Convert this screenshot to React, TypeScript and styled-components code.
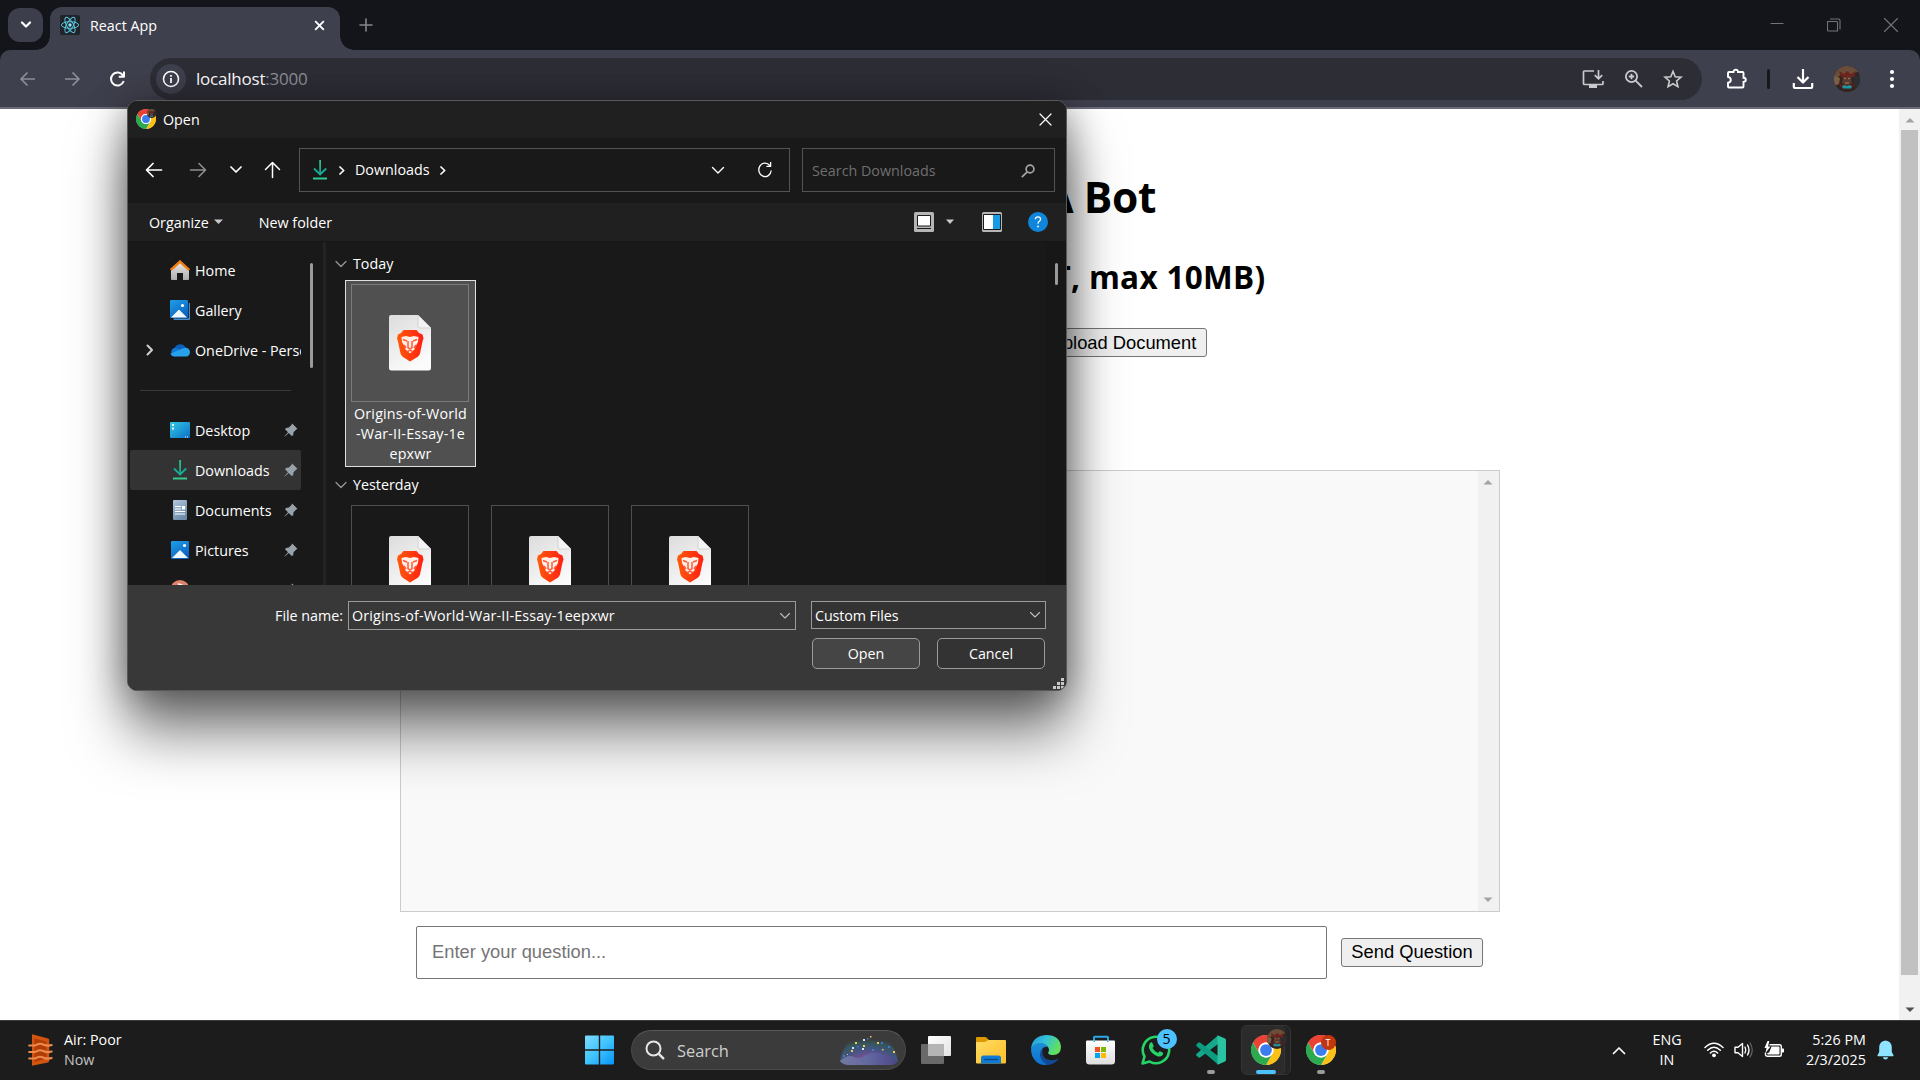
import React from "react";
import styled, { createGlobalStyle } from "styled-components";

const ui = `"Open Sans", "Noto Sans", sans-serif`;
const arial = `"Liberation Sans", Arial, sans-serif`;

const Global = createGlobalStyle`
  * { box-sizing: border-box; }
  html, body { margin: 0; padding: 0; overflow: hidden; background: #fff; }
  button, input { font-family: inherit; margin: 0; }
  svg { display: block; flex: none; }
`;

const Screen = styled.div`
  position: relative;
  width: 1920px;
  height: 1080px;
  display: flex;
  flex-direction: column;
  overflow: hidden;
  font-family: ${ui};
  font-size: 14.3px;
  line-height: 20px;
  white-space: nowrap;
`;

const Gap = styled.span<{ $w: number }>`
  flex: none;
  width: ${(p) => p.$w}px;
`;
const Fill = styled.span`
  flex: 1;
`;

/* ---------- browser chrome ---------- */

const TabStrip = styled.header`
  height: 50px;
  flex: none;
  display: flex;
  align-items: flex-start;
  background: #14151a;
  padding: 7px 22px 0 8px;
`;
const TabSearch = styled.button`
  width: 35px;
  height: 34px;
  margin: 1px 7px 0 0;
  border: 0;
  border-radius: 12px;
  background: #3d3e4b;
  display: grid;
  place-items: center;
  padding: 0;
`;
const Tab = styled.div`
  position: relative;
  width: 290px;
  height: 43px;
  display: flex;
  align-items: center;
  padding: 0 15px 7px 10px;
  background: #3f404d;
  border-radius: 12px 12px 0 0;
  color: #fff;
  &::before, &::after {
    content: "";
    position: absolute;
    bottom: 0;
    width: 14px;
    height: 14px;
  }
  &::before { left: -14px; background: radial-gradient(circle at 0 0, transparent 13.5px, #3f404d 14px); }
  &::after { right: -14px; background: radial-gradient(circle at 100% 0, transparent 13.5px, #3f404d 14px); }
`;
const TabTitle = styled.span`
  flex: 1;
  margin-left: 10px;
  padding-top: 1px;
`;
const NewTab = styled.div`
  margin: 11px auto 0 19px;
`;
const WindowButtons = styled.div`
  display: flex;
  gap: 43px;
  padding-top: 11px;
`;
const ToolbarBack = styled.div`
  flex: none;
  background: #14151a;
`;
const Toolbar = styled.div`
  height: 59px;
  display: flex;
  align-items: center;
  background: #3f404d;
  border-bottom: 2px solid #6a6b76;
  border-radius: 10px 10px 0 0;
  padding: 0 22px 0 18px;
`;
const NavIcons = styled.div`
  display: flex;
  align-items: center;
  gap: 25px;
  width: 132px;
`;
const Omnibox = styled.div`
  width: 1552px;
  height: 42px;
  border-radius: 21px;
  background: #2d2d36;
  display: flex;
  align-items: center;
  padding: 0 19px 0 6px;
`;
const InfoDot = styled.div`
  width: 30px;
  height: 30px;
  border-radius: 50%;
  background: #3f404d;
  display: grid;
  place-items: center;
`;
const Address = styled.span`
  flex: 1;
  margin-left: 10px;
  font-size: 17px;
  letter-spacing: -0.22px;
  padding-top: 1px;
  color: #fff;
  i { font-style: normal; color: #8e8f98; }
`;
const OmniActions = styled.div`
  display: flex;
  align-items: center;
  gap: 19.5px;
`;
const ToolSeparator = styled.span`
  width: 3px;
  height: 20px;
  border-radius: 2px;
  background: #17181d;
  margin: 0 22px 0 19px;
`;

/* ---------- web page ---------- */

const Viewport = styled.div`
  height: 911px;
  flex: none;
  display: flex;
  background: #fff;
`;
const Page = styled.main`
  flex: 1;
  display: flex;
  flex-direction: column;
  align-items: center;
  color: #000;
`;
const Title = styled.h1`
  width: 413px;
  margin: 58px 0 0;
  font-size: 42.5px;
  line-height: 60px;
  font-weight: 700;
  letter-spacing: -0.4px;
  text-align: right;
`;
const Subtitle = styled.h2`
  width: 632px;
  margin: 28px 0 0;
  font-size: 31.5px;
  line-height: 44px;
  font-weight: 700;
  letter-spacing: 0.3px;
  text-align: right;
`;
const UploadRow = styled.div`
  width: 514px;
  margin-top: 29px;
  display: flex;
  justify-content: flex-end;
`;
const WebButton = styled.button<{ $w: number; $bottom?: number; $right?: number }>`
  width: ${(p) => p.$w}px;
  height: 29px;
  padding: 0 ${(p) => p.$right ?? 0}px ${(p) => p.$bottom ?? 0}px 0;
  border: 1px solid #767676;
  border-radius: 3px;
  background: #efefef;
  color: #000;
  font: 18.33px/24px ${arial};
  white-space: nowrap;
`;
const ChatLog = styled.section`
  width: 1100px;
  height: 442px;
  margin-top: 113px;
  border: 1px solid #ccc;
  background: #f9f9f9;
  display: flex;
  justify-content: flex-end;
`;
const AskRow = styled.div`
  width: 1067px;
  height: 53px;
  margin-top: 14px;
  display: flex;
  align-items: center;
  justify-content: space-between;
`;
const Question = styled.input`
  width: 911px;
  height: 53px;
  padding: 0 15px 2px;
  border: 1px solid #767676;
  border-radius: 2px;
  background: #fff;
  font: 18.33px ${arial};
  &::placeholder { color: #757575; opacity: 1; }
`;
const Scrollbar = styled.div`
  width: 21px;
  display: flex;
  flex-direction: column;
  justify-content: space-between;
  align-items: center;
  background: #f1f1f1;
`;
const Thumb = styled.div`
  width: 17px;
  height: 845px;
  background: #c1c1c1;
  margin-bottom: auto;
`;
const ArrowCell = styled.div<{ $lift?: number }>`
  height: 21px;
  display: grid;
  place-items: center;
  padding-bottom: ${(p) => p.$lift ?? 0}px;
`;

/* ---------- file dialog ---------- */

const Dialog = styled.div`
  position: absolute;
  left: 127px;
  top: 100px;
  width: 940px;
  height: 591px;
  border: 1px solid #585858;
  border-radius: 10px;
  overflow: hidden;
  background: #191919;
  color: #fff;
  display: flex;
  flex-direction: column;
  box-shadow: 0 42px 56px rgba(0, 0, 0, 0.5), 0 4px 38px rgba(0, 0, 0, 0.42);
`;
const DialogTitle = styled.div`
  height: 37px;
  flex: none;
  display: flex;
  align-items: center;
  padding: 0 14px 1px 8px;
  background: #202020;
`;
const DialogCaption = styled.span`
  flex: 1;
  margin-left: 7px;
  padding-top: 1px;
`;
const DialogIcon = styled.div`
  position: relative;
  width: 20px;
  height: 20px;
`;
const DialogNav = styled.div`
  height: 65px;
  flex: none;
  display: flex;
  align-items: center;
  padding: 0 11px 1px 17px;
`;
const PathBox = styled.div`
  width: 491px;
  height: 44px;
  margin: 0 12px 0 18px;
  border: 1px solid #535353;
  display: flex;
  align-items: center;
  padding: 0 17px 0 12px;
`;
const PathText = styled.span`
  margin: 0 10px 0 10px;
`;
const SearchBox = styled.div`
  width: 253px;
  height: 44px;
  border: 1px solid #535353;
  display: flex;
  align-items: center;
  justify-content: space-between;
  padding: 1px 19px 0 9px;
  color: #6f6f6f;
`;
const Commands = styled.div`
  height: 38px;
  flex: none;
  display: flex;
  align-items: center;
  padding: 0 18px 0 21px;
  background: #202020;
`;
const Command = styled.span`
  padding-top: 2px;
`;
const CommandRight = styled.div`
  margin-left: auto;
  display: flex;
  align-items: center;
`;
const DialogBody = styled.div`
  height: 344px;
  flex: none;
  display: flex;
  overflow: hidden;
  border-top: 1px solid #161616;
`;
const Sidebar = styled.nav`
  width: 173px;
  padding: 8px 0 0 2px;
  flex: none;
`;
const SideItem = styled.div<{ $active?: boolean }>`
  height: 40px;
  display: grid;
  grid-template-columns: 36px 28px 1fr auto;
  align-items: center;
  overflow: hidden;
  border-radius: 2px;
  padding-right: 3px;
  background: ${(p) => (p.$active ? "#333" : "transparent")};
`;
const SideLabel = styled.span`
  overflow: hidden;
  margin: 0 -3px 0 1px;
  padding-top: 2px;
`;
const IconSlot = styled.span<{ $nudge?: number }>`
  display: grid;
  place-items: center;
  padding-left: ${(p) => p.$nudge ?? 0}px;
`;
const SideRule = styled.div`
  height: 40px;
  padding: 20px 10px 0;
  &::before { content: ""; display: block; height: 1px; background: #3a3a3a; }
`;
const SideScroll = styled.div`
  width: 25px;
  padding: 21px 0 0 9px;
  flex: none;
  border-right: 3px solid #232323;
  &::before { content: ""; display: block; width: 3px; height: 105px; border-radius: 2px; background: #9a9a9a; }
`;
const Files = styled.div`
  flex: 1;
  padding: 12px 0 0 9px;
`;
const GroupHead = styled.div`
  display: flex;
  align-items: center;
  height: 20px;
  gap: 6px;
`;
const Tiles = styled.div`
  display: flex;
  gap: 9px;
  padding: 6px 0 8px 10px;
`;
const Tile = styled.div<{ $selected?: boolean }>`
  width: 131px;
  height: 187px;
  display: flex;
  flex-direction: column;
  align-items: center;
  border: 1px solid ${(p) => (p.$selected ? "#e0e0e0" : "transparent")};
  background: ${(p) => (p.$selected ? "#505050" : "transparent")};
  padding-top: 3px;
  letter-spacing: 0.17px;
  text-align: center;
`;
const Thumbnail = styled.div<{ $selected?: boolean }>`
  width: 118px;
  height: 118px;
  flex: none;
  margin: 0 1px 2px 0;
  border: 1px solid ${(p) => (p.$selected ? "#7b7b7b" : "#4d4d4d")};
  display: grid;
  place-items: center;
  padding-bottom: ${(p) => (p.$selected ? 1 : 0)}px;
`;
const FilesScroll = styled.div`
  width: 21px;
  flex: none;
  padding: 21px 0 0 10px;
  background: #171717;
  &::before { content: ""; display: block; width: 3px; height: 22px; border-radius: 2px; background: #9a9a9a; }
`;
const DialogFoot = styled.div`
  flex: 1;
  background: #383838;
  display: flex;
  flex-direction: column;
  padding: 16px 20px 0 147px;
`;
const FieldRow = styled.div`
  display: flex;
  align-items: flex-start;
  height: 37px;
`;
const FieldLabel = styled.label`
  width: 73px;
  line-height: 29px;
`;
const Combo = styled.div<{ $w: number; $h: number; $bg: string }>`
  width: ${(p) => p.$w}px;
  height: ${(p) => p.$h}px;
  background: ${(p) => p.$bg};
  border: 1px solid #9b9b9b;
  display: flex;
  align-items: center;
  justify-content: space-between;
  padding: 0 4px 0 3px;
`;
const FileName = styled.span`
  letter-spacing: 0.14px;
`;
const FileType = styled.span`
  letter-spacing: -0.1px;
  padding-top: 2px;
`;
const ButtonRow = styled.div`
  display: flex;
  justify-content: flex-end;
  gap: 17px;
  padding-right: 1px;
`;
const DialogButton = styled.button<{ $bg: string }>`
  width: 108px;
  height: 31px;
  padding: 0 0 1px;
  border: 1px solid #9b9b9b;
  border-radius: 5px;
  background: ${(p) => p.$bg};
  color: #fff;
  font-size: 14.3px;
`;
const Grip = styled.div`
  display: grid;
  grid-template-columns: repeat(3, 3px);
  grid-auto-rows: 3px;
  gap: 1px;
  align-self: flex-end;
  margin: 9px -18px 0 0;
  i { background: #c8c8c8; }
  i.off { background: transparent; }
`;

/* ---------- taskbar ---------- */

const Taskbar = styled.footer`
  height: 60px;
  flex: none;
  display: grid;
  grid-template-columns: 572px 1fr auto;
  align-items: center;
  background: #1c1c1c;
  border-top: 1px solid #3a3a3a;
  padding-bottom: 1px;
  color: #fff;
`;
const Weather = styled.div`
  display: flex;
  align-items: center;
  padding-left: 28px;
  gap: 11px;
  span { display: block; }
  span + span { color: #c4c4c4; }
`;
const Apps = styled.div`
  display: flex;
  align-items: center;
`;
const AppSlot = styled.div`
  position: relative;
  width: 55px;
  height: 50px;
  display: flex;
  justify-content: center;
  padding-top: 10px;
`;
const GroupPlate = styled.div<{ $back?: boolean }>`
  position: absolute;
  left: ${(p) => (p.$back ? 10 : 3)}px;
  top: 0;
  width: ${(p) => (p.$back ? 43 : 44)}px;
  height: 50px;
  border-radius: 6px;
  border: 1px solid #343434;
  background: ${(p) => (p.$back ? "#242424" : "#2b2b2b")};
`;
const AppIcon = styled.div`
  position: relative;
  width: 30px;
  height: 30px;
`;
const Running = styled.span<{ $active?: boolean }>`
  position: absolute;
  bottom: 1px;
  left: 50%;
  transform: translateX(-50%);
  width: ${(p) => (p.$active ? 20 : 8)}px;
  height: 4px;
  border-radius: 2px;
  background: ${(p) => (p.$active ? "#4cc2ff" : "#9a9a9a")};
`;
const Badge = styled.span<{ $x: number; $y: number; $size: number; $bg: string; $fg: string; $font: number }>`
  position: absolute;
  left: ${(p) => p.$x}px;
  top: ${(p) => p.$y}px;
  width: ${(p) => p.$size}px;
  height: ${(p) => p.$size}px;
  border-radius: 50%;
  background: ${(p) => p.$bg};
  color: ${(p) => p.$fg};
  font-size: ${(p) => p.$font}px;
  line-height: ${(p) => p.$size}px;
  text-align: center;
`;
const FaceBadge = styled.span<{ $x: number; $y: number; $size: number }>`
  position: absolute;
  left: ${(p) => p.$x}px;
  top: ${(p) => p.$y}px;
  width: ${(p) => p.$size}px;
  height: ${(p) => p.$size}px;
`;
const SearchPill = styled.div`
  width: 275px;
  height: 40px;
  margin: 0 2px 0 4px;
  border-radius: 20px;
  background: #3b3b3b;
  border: 1px solid #4a4a4a;
  border-top-color: #595959;
  display: flex;
  align-items: center;
  padding: 0 6px 0 13px;
  color: #cfcfcf;
  font-size: 16.4px;
  span { flex: 1; margin-left: 12px; padding-top: 1px; }
`;
const Tray = styled.div`
  display: flex;
  align-items: center;
  padding-right: 26px;
`;
const Lang = styled.div`
  width: 40px;
  margin: 0 17px 0 21px;
  text-align: center;
`;
const TrayIcons = styled.div`
  display: flex;
  align-items: center;
  gap: 10px;
`;
const Clock = styled.div`
  width: 82px;
  margin-right: 11px;
  letter-spacing: 0.05px;
  text-align: right;
`;

/* ---------- drawings ---------- */

type StrokeProps = { w: number; h: number; d: string; c?: string; sw?: number; cap?: "round" | "butt"; fill?: string };
const Stroke = ({ w, h, d, c = "#fff", sw = 1.5, cap = "round", fill = "none" }: StrokeProps) => (
  <svg width={w} height={h} viewBox={`0 0 ${w} ${h}`}>
    <path d={d} stroke={c} strokeWidth={sw} strokeLinecap={cap} strokeLinejoin="round" fill={fill} />
  </svg>
);

const Triangle = ({ c, up }: { c: string; up?: boolean }) => (
  <svg width="10" height="6" viewBox="0 0 10 6">
    <path d={up ? "M0.5 5.5h9L5 1z" : "M0.5 .5h9L5 5z"} fill={c} />
  </svg>
);

const ReactLogo = () => (
  <svg width="20" height="20" viewBox="0 0 20 20">
    <rect width="20" height="20" rx="2" fill="#20232a" />
    <g fill="none" stroke="#58c4dc" strokeWidth="1">
      <ellipse cx="10" cy="10" rx="8.6" ry="3.3" />
      <ellipse cx="10" cy="10" rx="8.6" ry="3.3" transform="rotate(60 10 10)" />
      <ellipse cx="10" cy="10" rx="8.6" ry="3.3" transform="rotate(120 10 10)" />
    </g>
    <circle cx="10" cy="10" r="1.7" fill="#8be3f5" />
  </svg>
);

const Face = ({ size }: { size: number }) => (
  <svg width={size} height={size} viewBox="0 0 26 26">
    <clipPath id={`face${size}`}><circle cx="13" cy="13" r="13" /></clipPath>
    <g clipPath={`url(#face${size})`}>
      <rect width="26" height="26" fill="#33241f" />
      <path d="M0 0h26v5l-8 3-12 1-6 8z" fill="#6b4e3a" />
      <path d="M0 10l6 2-1 6-5 2z" fill="#7d5e46" />
      <path d="M19 8l7 2v14l-6-3z" fill="#2b2d30" />
      <path d="M5 5l5 3 3-3 4 3 5-3-2 6H7z" fill="#6e241e" />
      <path d="M9 11h8l1 6-5 3-5-3z" fill="#543a30" />
      <path d="M10 12l2 1M16 12l-2 1M11 17h4" stroke="#c27a48" strokeWidth="1" />
      <path d="M5 16l4 3h8l4-3-1 5H6z" fill="#5c1f1e" />
      <path d="M8 20.5l2-1.500 3 1 3-1 2 1.500-1 2H9z" fill="#1c98a0" />
    </g>
  </svg>
);

const ChromeLogo = ({ size }: { size: number }) => (
  <svg width={size} height={size} viewBox="0 0 48 48">
    <circle cx="24" cy="24" r="23.500" fill="#fff" />
    <path d="M3.200 12A24 24 0 0 1 44.800 12H24A12 12 0 0 0 13.600 30z" fill="#ea4335" />
    <path d="M44.800 12A24 24 0 0 1 24 48L34.400 30A12 12 0 0 0 24 12z" fill="#fbc116" />
    <path d="M24 48A24 24 0 0 1 3.200 12L13.600 30A12 12 0 0 0 34.400 30z" fill="#2da94f" />
    <circle cx="24" cy="24" r="12" fill="#fff" />
    <circle cx="24" cy="24" r="9.400" fill="#3b7ded" />
  </svg>
);

const BraveFile = () => (
  <svg width="44" height="58" viewBox="0 0 44 58">
    <defs>
      <linearGradient id="paper" x1="0" y1="0" x2="0.5" y2="1">
        <stop offset="0" stopColor="#dcdcdc" /><stop offset="1" stopColor="#fbfbfb" />
      </linearGradient>
      <linearGradient id="brave" x1="0" y1="0" x2="1" y2="0">
        <stop offset="0" stopColor="#ff5a0a" /><stop offset="1" stopColor="#ff1f12" />
      </linearGradient>
    </defs>
    <path d="M3 1h27l13 13v40a2.500 2.500 0 0 1-2.500 2.500h-37A2.500 2.500 0 0 1 1 54V3a2 2 0 0 1 2-2z" fill="url(#paper)" />
    <path d="M30 1l13 13H32a2 2 0 0 1-2-2z" fill="#f3f3f3" stroke="#c9c9c9" strokeWidth=".7" />
    <path d="M15.500 16h13l2.500 3 3.500 1.500 1 4-1 3-2.500 12q-.6 2-2.200 3.200L22 47.500l-7.300-4.800q-1.600-1.200-2.200-3.200L10 27.500l-1-3 1-4L13 19z" fill="url(#brave)" />
    <path d="M13.500 23l4.500-1 4 1 4-1 4.500 1-.5 5-2.500 4.500-1 3-4.500 4-4.500-4-1-3-2.500-4.500z" fill="#fff0e8" />
    <path d="M15 25.500l4 1.500M29 25.500L25 27M20 27v6.500l2 1.500 2-1.500V27M16 31l2 3M28 31l-2 3M19.500 37.500L22 36l2.500 1.500" stroke="#ff5a3a" strokeWidth="1.500" fill="none" />
  </svg>
);

const DownloadGreen = () => (
  <svg width="16" height="22" viewBox="0 0 16 22">
    <defs><linearGradient id="dl" x1="0" y1="0" x2="0" y2="1"><stop offset="0" stopColor="#2fcf97" /><stop offset="1" stopColor="#12a594" /></linearGradient></defs>
    <path d="M7.250 1h1.700v14h-1.700z" fill="url(#dl)" />
    <path d="M2 9.500l6.100 6 6.100-6" fill="none" stroke="#17ad96" strokeWidth="1.800" />
    <path d="M1 19.500h14" stroke="#34c98f" strokeWidth="1.800" />
  </svg>
);

const HomeIcon = () => (
  <svg width="20" height="20" viewBox="0 0 20 20">
    <defs><linearGradient id="hm" x1="0" y1="0" x2="0" y2="1"><stop offset="0" stopColor="#e9e9e9" /><stop offset="1" stopColor="#adadad" /></linearGradient></defs>
    <path d="M1 9.500L10 1.500l9 8V19a1 1 0 0 1-1 1h-5v-7H7v7H2a1 1 0 0 1-1-1z" fill="url(#hm)" />
    <path d="M.8 10L10 1.500l9.200 8.500" fill="none" stroke="#f07f13" strokeWidth="2.400" />
  </svg>
);

const PictureIcon = ({ stacked }: { stacked?: boolean }) => (
  <svg width="20" height="20" viewBox="0 0 20 20">
    <defs><linearGradient id="pic" x1="0" y1="0" x2="0.600" y2="1"><stop offset="0" stopColor="#1fa0e8" /><stop offset="1" stopColor="#0a62c0" /></linearGradient></defs>
    {stacked && <path d="M3 18.500h15a.8.8 0 0 0 .8-.8V3h1.200v16.200a.8.8 0 0 1-.8.8H4z" fill="#3f8fd6" />}
    <rect x={stacked ? 0 : 1} y={stacked ? 0 : 1} width="18" height="18" rx="1.200" fill="url(#pic)" />
    <path d={stacked ? "M1 17.500l7.500-7.500q.5-.5 1 0l7.500 7.500z" : "M2 18l7.500-7.500q.5-.5 1 0L18 18z"} fill="#eef7fd" />
    <circle cx={stacked ? 12.5 : 14.5} cy={5.5} r="1.600" fill="#fff" />
  </svg>
);

const CloudIcon = () => (
  <svg width="20" height="14" viewBox="0 0 20 14">
    <path d="M4.500 5.500A6 6 0 0 1 15.500 4.500a4.600 4.600 0 0 1 4.500 5l-8-1z" fill="#0a5fb8" />
    <path d="M4.500 13.500A4.400 4.400 0 0 1 4.500 5q2.500-.4 4.500 1.200l7 5z" fill="#0f78d4" />
    <path d="M4.500 13.500q-3 0-4.200-2.800L10 6.500l3-1.200a5 5 0 0 1 2.500-.6q4 .4 4.500 4.500-.2 4-4.200 4.300z" fill="#28a0ea" />
  </svg>
);

const DesktopIcon = () => (
  <svg width="20" height="16" viewBox="0 0 20 16">
    <defs><linearGradient id="dsk" x1="0" y1="0" x2="1" y2="1"><stop offset="0" stopColor="#33c9e2" /><stop offset="1" stopColor="#0b70c9" /></linearGradient></defs>
    <rect width="20" height="16" rx="1" fill="url(#dsk)" />
    <path d="M2 2h2v2H2zM2 5.500h2v2H2zM15 14.500h1v1h-1zM17 14.500h1v1h-1z" fill="#e6fbff" />
  </svg>
);

const DocumentIcon = () => (
  <svg width="14" height="20" viewBox="0 0 14 20">
    <defs><linearGradient id="doc" x1="0" y1="0" x2="0.500" y2="1"><stop offset="0" stopColor="#b3c6dc" /><stop offset="1" stopColor="#6d8cab" /></linearGradient></defs>
    <rect width="14" height="20" rx="1" fill="url(#doc)" />
    <path d="M2 6.500h6M2 9h6M2 11.500h10M2 14h10" stroke="#fff" strokeWidth="1.200" />
    <path d="M9 6h3v3.500H9z" fill="#fff" />
  </svg>
);

const MusicIcon = () => (
  <svg width="20" height="20" viewBox="0 0 20 20">
    <circle cx="10" cy="9.500" r="9.500" fill="#e2826a" />
    <path d="M9 14V4l5 2" fill="none" stroke="#fff" strokeWidth="1.500" />
  </svg>
);

const Pin = () => (
  <svg width="14" height="14" viewBox="0 0 14 14">
    <path d="M8.200.6l5.200 5.200-1.400.9-2.500 2.600-.3 3-1.500.6-3-3L.8 13.600.4 13.200 4 9.300 1.200 6.400l.6-1.500 3-.3L7.400 2z" fill="#98a2ab" />
  </svg>
);

const Refresh = () => (
  <svg width="14" height="18" viewBox="0 0 14 18">
    <path d="M11.800 4.500A6.200 6.800 0 1 0 13.200 9.500M12.600 1v4.400H8.400" fill="none" stroke="#fff" strokeWidth="1.300" />
  </svg>
);

const WeatherIcon = () => (
  <svg width="25" height="32" viewBox="0 0 25 32">
    <path d="M4 1q0-1 1.200-.6L20 4.500q1.200.4 1.200 1.500v21q0 1-1.200 1.400L5.200 31.500Q4 32 4 31z" fill="#d35411" />
    <path d="M6.500 4.500l12 3v17l-12 3.500z" fill="#b03d06" />
    <g fill="none" stroke="#ee8a4d" strokeWidth="2.100" strokeLinecap="round">
      <path d="M1.200 11.500h6q4-3 8-1 4 1.800 8.500 .6" />
      <path d="M1.200 18h6q4-3 8-1 4 1.800 8.500 .6" />
      <path d="M1.200 24.500h6q4-3 8-1 4 1.800 8.500 .6" />
    </g>
  </svg>
);

const WindowsLogo = () => (
  <svg width="30" height="30" viewBox="0 0 30 30">
    <defs><linearGradient id="win" x1="0" y1="0" x2="1" y2="1"><stop offset="0" stopColor="#7fdcff" /><stop offset=".5" stopColor="#3fc4fd" /><stop offset="1" stopColor="#0693f8" /></linearGradient></defs>
    <path d="M1 .5H13.800V14.300H0V1.500a1 1 0 0 1 1-1zM15.200.5H28a1 1 0 0 1 1 1V14.300H15.200zM0 15.700H13.800V29.500H1a1 1 0 0 1-1-1zM15.200 15.700H29V28.500a1 1 0 0 1-1 1H15.200z" fill="url(#win)" />
  </svg>
);

const SearchArt = () => (
  <svg width="60" height="32" viewBox="0 0 60 32">
    <defs>
      <radialGradient id="sky" cx=".5" cy=".9" r=".75">
        <stop offset="0" stopColor="#66734f" /><stop offset=".3" stopColor="#6c5290" /><stop offset=".6" stopColor="#41557f" /><stop offset=".82" stopColor="#35565c" /><stop offset="1" stopColor="#3b3b3b" />
      </radialGradient>
      <linearGradient id="hill" x1="0" y1="0" x2="1" y2="0"><stop offset="0" stopColor="#7d81a5" /><stop offset=".5" stopColor="#6068a8" /><stop offset="1" stopColor="#4c4583" /></linearGradient>
    </defs>
    <path d="M1 27Q6 1 30 .5q24 .5 29 26.500-3 4-8 4H10q-6 0-9-4z" fill="url(#sky)" />
    <path d="M1 27q8-7 14-4 5 3 12-2 10-5 18 0 8 1 14 6-3 4-8 4H10q-6 0-9-4z" fill="url(#hill)" opacity=".85" />
    <path d="M16 8h2v2h-2zM24 11h2v2h-2zM12 16h2v2h-2zM38 8h2v2h-2zM31 2h1.500v1.500H31zM54 17h2v2h-2zM43 15h1.500v1.500H43zM8 20h1v1H8z" fill="#f0cc4a" />
    <path d="M24 5h2v2h-2zM13 13h2v2h-2zM23 14h2v2h-2z" fill="#d5e2ff" />
    <path d="M28 4h1.500v1.500H28zM33 15h2v2h-2zM42 8h2v2h-2zM49 12h2v2h-2zM4 21h2v2H4zM18 12h1.500v1.500H18z" fill="#3f78d6" />
  </svg>
);

const TaskView = () => (
  <svg width="30" height="30" viewBox="0 0 30 30">
    <defs><linearGradient id="tv" x1="0" y1="0" x2="1" y2="1"><stop offset="0" stopColor="#fff" /><stop offset="1" stopColor="#e3e3e3" /></linearGradient></defs>
    <rect x="7" y="1" width="23" height="20" rx="1" fill="url(#tv)" />
    <rect x="0" y="9" width="23" height="20" rx="1" fill="#6a6a6a" />
    <path d="M7 9h16v12H7z" fill="#b5b5b5" />
  </svg>
);

const Folder = () => (
  <svg width="30" height="30" viewBox="0 0 30 30">
    <defs><linearGradient id="fd" x1="0" y1="0" x2="1" y2="1"><stop offset="0" stopColor="#ffdc66" /><stop offset="1" stopColor="#ffbe24" /></linearGradient></defs>
    <path d="M0 3q0-1 1-1h8q1 0 1.700.7L13 5h6v6H0z" fill="#dd9a00" />
    <path d="M0 8q0-1 1-1h8l3.500-2H29q1 0 1 1v21.500q0 1-1 1H1q-1 0-1-1z" fill="url(#fd)" />
    <path d="M5 28.500V23q0-2.500 2.500-2.500h15q2.500 0 2.500 2.500v5.500z" fill="#0f7bd2" />
    <path d="M8.500 24.500h13" stroke="#0a4c94" strokeWidth="1.300" strokeLinecap="round" />
  </svg>
);

const Edge = () => (
  <svg width="30" height="30" viewBox="0 0 30 30">
    <defs>
      <linearGradient id="eg1" x1="0" y1="0" x2="1" y2=".4"><stop offset="0" stopColor="#2195d8" /><stop offset=".5" stopColor="#33c1da" /><stop offset="1" stopColor="#62e05c" /></linearGradient>
      <linearGradient id="eg2" x1="0" y1="0" x2="0" y2="1"><stop offset="0" stopColor="#1b8fd8" /><stop offset="1" stopColor="#0f6fce" /></linearGradient>
    </defs>
    <path d="M0 14Q1 1 15 0q14 0 15 12-.3 8-8 8-4 0-5-2 2-3 0-6-3-4-8-3.500Q3 9 0 14z" fill="url(#eg1)" />
    <path d="M0 14Q2.500 8 9 8q6 0 8 4-5-1-6.500 4-1 9 7 13.300Q10 31.500 4.500 26 0 21 0 14z" fill="url(#eg2)" />
    <path d="M12 13q-2.500 9 4.500 11.500 6 1.800 11.200-1Q24 29.200 17 30q-7-3-8-9.500Q9 15 12 13z" fill="#124a96" />
  </svg>
);

const Store = () => (
  <svg width="30" height="30" viewBox="0 0 30 30">
    <defs><linearGradient id="st" x1="0" y1="0" x2="0" y2="1"><stop offset="0" stopColor="#fff" /><stop offset="1" stopColor="#dedede" /></linearGradient></defs>
    <path d="M8 7V2.300q0-.6.6-.6h12.800q.6 0 .6.6V7" fill="none" stroke="#29a9e8" strokeWidth="1.900" />
    <path d="M0 6.500q0-1 1-1h27q1 0 1 1V26q0 3.500-3.500 3.500h-22Q0 29.500 0 26z" fill="url(#st)" />
    <path d="M7.500 5.500H9V7H7.500zM21 5.500h1.500V7H21z" fill="#29a9e8" />
    <path d="M9 12h5v5H9z" fill="#f25022" /><path d="M15 12h5v5h-5z" fill="#7fba00" />
    <path d="M9 18h5v5H9z" fill="#00a4ef" /><path d="M15 18h5v5h-5z" fill="#ffb900" />
  </svg>
);

const WhatsApp = () => (
  <svg width="30" height="30" viewBox="0 0 30 30">
    <path d="M1.500 28.500l2-7A13.200 13.200 0 1 1 8.700 26.600z" fill="none" stroke="#25d366" strokeWidth="2.600" strokeLinejoin="round" />
    <path d="M9 8q1-1 2-.5.500.2 1.700 3.500 0 .8-1.200 2 2 3.800 5.500 5 1.300-2 2-1.800.7.200 3 1.500.5 1-.5 2.500-1.700 1.800-4.500 1.300Q10 19 8 13q-.5-3 1-5z" fill="#25d366" />
  </svg>
);

const Code = () => (
  <svg width="30" height="30" viewBox="0 0 30 30">
    <path d="M22 .5v8.500L4 22.500q-1 .5-1.800-.3L.4 20.500q-.6-1 .2-1.700z" fill="#15a88c" />
    <path d="M22 29.500V21L4 7.500q-1-.5-1.800.3L.4 9.500q-.6 1 .2 1.700z" fill="#0c9c80" />
    <path d="M21.500.3l7 3Q30 4 30 5v20q0 1-1.500 1.700l-7 3z" fill="#2ac3a2" />
  </svg>
);

const Wifi = () => (
  <svg width="20" height="16" viewBox="0 0 20 16">
    <g fill="none" stroke="#fff" strokeWidth="1.500" strokeLinecap="round">
      <path d="M1 5.500q9-8.500 18 0M3.700 8.300q6.300-6 12.600 0M6.400 11q3.600-3.500 7.200 0" />
    </g>
    <circle cx="10" cy="13.300" r="1.900" fill="#fff" />
  </svg>
);

const Speaker = () => (
  <svg width="20" height="18" viewBox="0 0 20 18">
    <path d="M1 6.300h3L8.500 2.500v13L4 11.800H1z" fill="none" stroke="#fff" strokeWidth="1.400" strokeLinejoin="round" />
    <path d="M11 6q1.600 3 0 6M13.500 4q3 5 0 10" fill="none" stroke="#fff" strokeWidth="1.400" strokeLinecap="round" />
    <path d="M16 2q4.500 7 0 14" fill="none" stroke="#666" strokeWidth="1.200" strokeLinecap="round" />
  </svg>
);

const Battery = () => (
  <svg width="20" height="18" viewBox="0 0 20 18">
    <path d="M5.500 3.700h10q1.800 0 1.800 1.800v8q0 1.800-1.800 1.800H3.500Q1.500 15.300 1.500 13.500v-2" fill="none" stroke="#fff" strokeWidth="1.400" />
    <path d="M7.500 5.500h7.300q.7 0 .7.700v6.600q0 .7-.7.700H4q-.7 0-.7-.7V12l1.900-.6z" fill="#fff" />
    <path d="M3.500 0L.5 7h2L1.500 12 6.500 5.500H4L5.300 0z" fill="#fff" />
    <path d="M18 7.500h1.300q.7 0 .7.700v2.600q0 .7-.7.700H18z" fill="#fff" />
  </svg>
);

const Bell = () => (
  <svg width="17" height="20" viewBox="0 0 17 20">
    <path d="M8.500.5q6 .5 6.300 7V12l1.700 3.300q.3.900-.6.900H1.100q-.9 0-.6-.9L2.200 12V7.500Q2.500 1 8.500.5zM5.800 17.200h5.400q-.7 2.300-2.700 2.300t-2.700-2.300z" fill="#8fe3ff" />
  </svg>
);

/* ---------- composition ---------- */

const sideItems = [
  { label: "Desktop", icon: <DesktopIcon /> },
  { label: "Downloads", icon: <DownloadGreen />, active: true },
  { label: "Documents", icon: <DocumentIcon /> },
  { label: "Pictures", icon: <PictureIcon /> },
];

const Browser = () => (
  <>
    <TabStrip>
      <TabSearch><Stroke w={12} h={8} d="M2 1.500l4 4 4-4" sw={2.2} /></TabSearch>
      <Tab>
        <ReactLogo />
        <TabTitle>React App</TabTitle>
        <Stroke w={11} h={11} d="M1.200 1.200l8.600 8.600M9.800 1.200L1.200 9.800" sw={1.9} cap="butt" />
      </Tab>
      <NewTab><Stroke w={14} h={14} d="M7 1v12M1 7h12" c="#85868c" sw={1.6} /></NewTab>
      <WindowButtons>
        <Stroke w={14} h={14} d="M.5 5.500h13" c="#737477" sw={1} cap="butt" />
        <Stroke w={14} h={14} d="M1 3.500h8.500q1 0 1 1V13H1.500q-1 0-1-1V3.500M3.500 1h8q1.500 0 1.500 1.500V11" c="#737477" sw={1.1} />
        <Stroke w={14} h={14} d="M.5.5l13 13M13.500.5l-13 13" c="#737477" sw={1.1} />
      </WindowButtons>
    </TabStrip>
    <ToolbarBack>
      <Toolbar>
        <NavIcons>
          <Stroke w={20} h={18} d="M17 9H3M9.500 2.500L3 9l6.500 6.500" c="#8d8e97" sw={1.7} cap="butt" />
          <Stroke w={20} h={18} d="M2 9h14M9.500 2.500L16 9l-6.500 6.500" c="#8d8e97" sw={1.7} cap="butt" />
          <Stroke w={20} h={18} d="M15 5.500A6.500 6.500 0 1 0 15.700 11M16 1.500v5.200h-5.200" sw={2} cap="butt" />
        </NavIcons>
        <Omnibox>
          <InfoDot>
            <svg width="18" height="18" viewBox="0 0 18 18">
              <circle cx="9" cy="9" r="7.500" fill="none" stroke="#fff" strokeWidth="1.600" />
              <path d="M9 8v5M9 5v1.700" stroke="#fff" strokeWidth="1.800" />
            </svg>
          </InfoDot>
          <Address>localhost<i>:3000</i></Address>
          <OmniActions>
            <svg width="22" height="20" viewBox="0 0 22 20" fill="none" stroke="#c9cacd" strokeWidth="1.700">
              <path d="M12 2H2.500q-1 0-1 1v11.500q0 1 1 1H20q1 0 1-1V12M16.500 1v8.500M12.800 6.200l3.700 3.700 3.700-3.700" />
              <path d="M7 17.500h8" strokeWidth="3" />
            </svg>
            <svg width="20" height="20" viewBox="0 0 20 20" fill="none" stroke="#c9cacd" strokeWidth="1.800">
              <circle cx="7.500" cy="7.500" r="5.600" /><path d="M11.600 11.600l6.400 6.400M7.500 4.800v5.400M4.800 7.500h5.400" />
            </svg>
            <svg width="20" height="20" viewBox="0 0 20 20" fill="none" stroke="#c9cacd" strokeWidth="1.600">
              <path d="M10 2.300l2.200 5.400 5.800.5-4.400 3.800 1.300 5.700-4.900-3-4.900 3L6.400 12 2 8.200l5.800-.5z" />
            </svg>
          </OmniActions>
        </Omnibox>
        <Gap $w={24} />
        <svg width="22" height="22" viewBox="0 0 22 22" fill="none" stroke="#fff" strokeWidth="1.900">
          <path d="M3 4h4.500q0-2.200 2.300-2.200T12 4h4.500q1 0 1 1v4.700q2.300 0 2.300 2.100t-2.300 2.100v4.600q0 1-1 1H3q-1 0-1-1v-3.700q2.800-.5 2.800-2.900T2 8.900V5q0-1 1-1z" />
        </svg>
        <ToolSeparator />
        <Stroke w={22} h={22} d="M11 1v13M5.500 9l5.500 5.500L16.500 9M1.800 15v4q0 1 1 1h16.400q1 0 1-1v-4" sw={2.2} cap="butt" />
        <Gap $w={20} />
        <Face size={26} />
        <Gap $w={29} />
        <svg width="6" height="20" viewBox="0 0 6 20" fill="#fff">
          <circle cx="3" cy="3" r="2.100" /><circle cx="3" cy="10" r="2.100" /><circle cx="3" cy="17" r="2.100" />
        </svg>
      </Toolbar>
    </ToolbarBack>
    <Viewport>
      <Page>
        <Title>Q&amp;A Bot</Title>
        <Subtitle>(PDF, TXT, max 10MB)</Subtitle>
        <UploadRow><WebButton $w={164} $right={3}>Upload Document</WebButton></UploadRow>
        <ChatLog>
          <Scrollbar>
            <ArrowCell><Triangle c="#a3a3a3" up /></ArrowCell>
            <ArrowCell $lift={2}><Triangle c="#a3a3a3" /></ArrowCell>
          </Scrollbar>
        </ChatLog>
        <AskRow>
          <Question placeholder="Enter your question..." />
          <WebButton $w={142} $bottom={1}>Send Question</WebButton>
        </AskRow>
      </Page>
      <Scrollbar>
        <ArrowCell><Triangle c="#a3a3a3" up /></ArrowCell>
        <Thumb />
        <ArrowCell><Triangle c="#505050" /></ArrowCell>
      </Scrollbar>
    </Viewport>
  </>
);

const OpenDialog = () => (
  <Dialog>
    <DialogTitle>
      <DialogIcon>
        <ChromeLogo size={20} />
        <FaceBadge $x={11} $y={0} $size={9}><Face size={9} /></FaceBadge>
      </DialogIcon>
      <DialogCaption>Open</DialogCaption>
      <Stroke w={13} h={13} d="M1 1l11 11M12 1L1 12" sw={1.2} />
    </DialogTitle>
    <DialogNav>
      <Stroke w={18} h={16} d="M16.500 8H2M8 1.500L1.500 8 8 14.500" sw={1.7} />
      <Gap $w={26} />
      <Stroke w={18} h={16} d="M1.500 8H16M10 1.500L16.500 8 10 14.500" c="#8f8f8f" sw={1.6} />
      <Gap $w={23} />
      <Stroke w={12} h={8} d="M1 1l5 5 5-5" sw={1.7} />
      <Gap $w={22} />
      <Stroke w={17} h={18} d="M8.500 16.500V2M1.500 8.500l7-7 7 7" sw={1.5} />
      <PathBox>
        <DownloadGreen />
        <Gap $w={11} />
        <Stroke w={6} h={9} d="M1 1l3.700 3.500L1 8" sw={1.7} />
        <PathText>Downloads</PathText>
        <Stroke w={6} h={9} d="M1 1l3.700 3.500L1 8" sw={1.7} />
        <Fill />
        <Stroke w={14} h={9} d="M1.500 1.500l5.500 5.500 5.500-5.500" sw={1.4} />
        <Gap $w={33} />
        <Refresh />
      </PathBox>
      <SearchBox>
        Search Downloads
        <svg width="14" height="14" viewBox="0 0 14 14" fill="none" stroke="#a5a5a5" strokeWidth="1.700">
          <circle cx="9" cy="5" r="3.900" /><path d="M6.200 7.800L.8 13.200" />
        </svg>
      </SearchBox>
    </DialogNav>
    <Commands>
      <Command>Organize</Command>
      <svg width="14" height="6" viewBox="0 0 14 6"><path d="M5 .5h9L9.500 5z" fill="#c9c9c9" /></svg>
      <Gap $w={36} />
      <Command>New folder</Command>
      <CommandRight>
        <svg width="20" height="20" viewBox="0 0 20 20">
          <rect width="20" height="20" rx="1.500" fill="#b5b5b5" />
          <path d="M3.500 3.500h13v10.500h-13z" fill="#fff" stroke="#1c1c1c" />
          <path d="M3 16.500h14" stroke="#1c1c1c" />
        </svg>
        <svg width="48" height="6" viewBox="0 0 48 6"><path d="M12 .5h8L16 5z" fill="#c9c9c9" /></svg>
        <svg width="20" height="20" viewBox="0 0 20 20">
          <rect width="20" height="20" rx="1.500" fill="#b5b5b5" />
          <path d="M1.500 2.500h17v15h-17z" fill="#fff" stroke="#1c1c1c" />
          <path d="M11 3h7v14h-7z" fill="#179be6" />
        </svg>
        <Gap $w={26} />
        <svg width="20" height="20" viewBox="0 0 20 20">
          <circle cx="10" cy="10" r="10" fill="#0f86dc" />
          <path d="M7.300 7.300Q7.500 4.800 10 4.800t2.600 2.300q0 1.300-1.300 2.200T10 11.800" fill="none" stroke="#fff" strokeWidth="1.300" />
          <circle cx="10" cy="14.500" r=".9" fill="#fff" />
        </svg>
      </CommandRight>
    </Commands>
    <DialogBody>
      <Sidebar>
        <SideItem><i /><IconSlot><HomeIcon /></IconSlot><SideLabel>Home</SideLabel></SideItem>
        <SideItem><i /><IconSlot><PictureIcon stacked /></IconSlot><SideLabel>Gallery</SideLabel></SideItem>
        <SideItem>
          <IconSlot $nudge={3}><Stroke w={8} h={12} d="M1.500 1.500L6 6l-4.500 4.500" c="#d0d0d0" sw={2} /></IconSlot>
          <IconSlot><CloudIcon /></IconSlot>
          <SideLabel>OneDrive - Personal</SideLabel>
        </SideItem>
        <SideRule />
        {sideItems.map((s) => (
          <SideItem key={s.label} $active={s.active}>
            <i /><IconSlot>{s.icon}</IconSlot><SideLabel>{s.label}</SideLabel><Pin />
          </SideItem>
        ))}
        <SideItem><i /><IconSlot><MusicIcon /></IconSlot><i /><Pin /></SideItem>
      </Sidebar>
      <SideScroll />
      <Files>
        <GroupHead><Stroke w={12} h={8} d="M1 1.500l5 5 5-5" c="#9a9a9a" sw={1.2} />Today</GroupHead>
        <Tiles>
          <Tile $selected>
            <Thumbnail $selected><BraveFile /></Thumbnail>
            <span>Origins-of-World</span>
            <span>-War-II-Essay-1e</span>
            <span>epxwr</span>
          </Tile>
        </Tiles>
        <GroupHead><Stroke w={12} h={8} d="M1 1.500l5 5 5-5" c="#9a9a9a" sw={1.2} />Yesterday</GroupHead>
        <Tiles>
          {[0, 1, 2].map((n) => (
            <Tile key={n}><Thumbnail><BraveFile /></Thumbnail></Tile>
          ))}
        </Tiles>
      </Files>
      <FilesScroll />
    </DialogBody>
    <DialogFoot>
      <FieldRow>
        <FieldLabel>File name:</FieldLabel>
        <Combo $w={448} $h={29} $bg="#383838">
          <FileName>Origins-of-World-War-II-Essay-1eepxwr</FileName>
          <Stroke w={12} h={8} d="M1.500 1.500L6 6l4.500-4.500" c="#bdbdbd" sw={1.1} />
        </Combo>
        <Gap $w={15} />
        <Combo $w={235} $h={28} $bg="#333333">
          <FileType>Custom Files</FileType>
          <Stroke w={12} h={8} d="M1.500 1.500L6 6l4.500-4.500" c="#bdbdbd" sw={1.1} />
        </Combo>
      </FieldRow>
      <ButtonRow>
        <DialogButton $bg="#454545">Open</DialogButton>
        <DialogButton $bg="#333333">Cancel</DialogButton>
      </ButtonRow>
      <Grip>
        <i className="off" /><i className="off" /><i />
        <i className="off" /><i /><i />
        <i /><i /><i />
      </Grip>
    </DialogFoot>
  </Dialog>
);

const Bar = () => (
  <Taskbar>
    <Weather>
      <WeatherIcon />
      <div><span>Air: Poor</span><span>Now</span></div>
    </Weather>
    <Apps>
      <AppSlot><AppIcon><WindowsLogo /></AppIcon></AppSlot>
      <SearchPill>
        <svg width="20" height="20" viewBox="0 0 20 20" fill="none" stroke="#e6e6e6" strokeLinecap="round">
          <circle cx="8.500" cy="8.500" r="7" strokeWidth="2" /><path d="M13.800 13.800l4.500 4.500" strokeWidth="2.400" />
        </svg>
        <span>Search</span>
        <SearchArt />
      </SearchPill>
      <AppSlot><AppIcon><TaskView /></AppIcon></AppSlot>
      <AppSlot><AppIcon><Folder /></AppIcon></AppSlot>
      <AppSlot><AppIcon><Edge /></AppIcon></AppSlot>
      <AppSlot><AppIcon><Store /></AppIcon></AppSlot>
      <AppSlot>
        <AppIcon>
          <WhatsApp />
          <Badge $x={16} $y={-6} $size={20} $bg="#4cc2ff" $fg="#000" $font={14}>5</Badge>
        </AppIcon>
      </AppSlot>
      <AppSlot><AppIcon><Code /></AppIcon><Running /></AppSlot>
      <AppSlot>
        <GroupPlate $back />
        <GroupPlate />
        <AppIcon>
          <ChromeLogo size={30} />
          <FaceBadge $x={16} $y={-6} $size={20}><Face size={20} /></FaceBadge>
        </AppIcon>
        <Running $active />
      </AppSlot>
      <AppSlot>
        <AppIcon>
          <ChromeLogo size={30} />
          <Badge $x={15} $y={0} $size={15} $bg="#c1350f" $fg="#fff" $font={9}>T</Badge>
        </AppIcon>
        <Running />
      </AppSlot>
    </Apps>
    <Tray>
      <Stroke w={14} h={9} d="M1.500 7.500L7 2l5.500 5.500" sw={1.7} />
      <Lang><div>ENG</div><div>IN</div></Lang>
      <TrayIcons><Wifi /><Speaker /><Battery /></TrayIcons>
      <Clock><div>5:26 PM</div><div>2/3/2025</div></Clock>
      <Bell />
    </Tray>
  </Taskbar>
);

export default function App() {
  return (
    <Screen>
      <Global />
      <Browser />
      <Bar />
      <OpenDialog />
    </Screen>
  );
}
